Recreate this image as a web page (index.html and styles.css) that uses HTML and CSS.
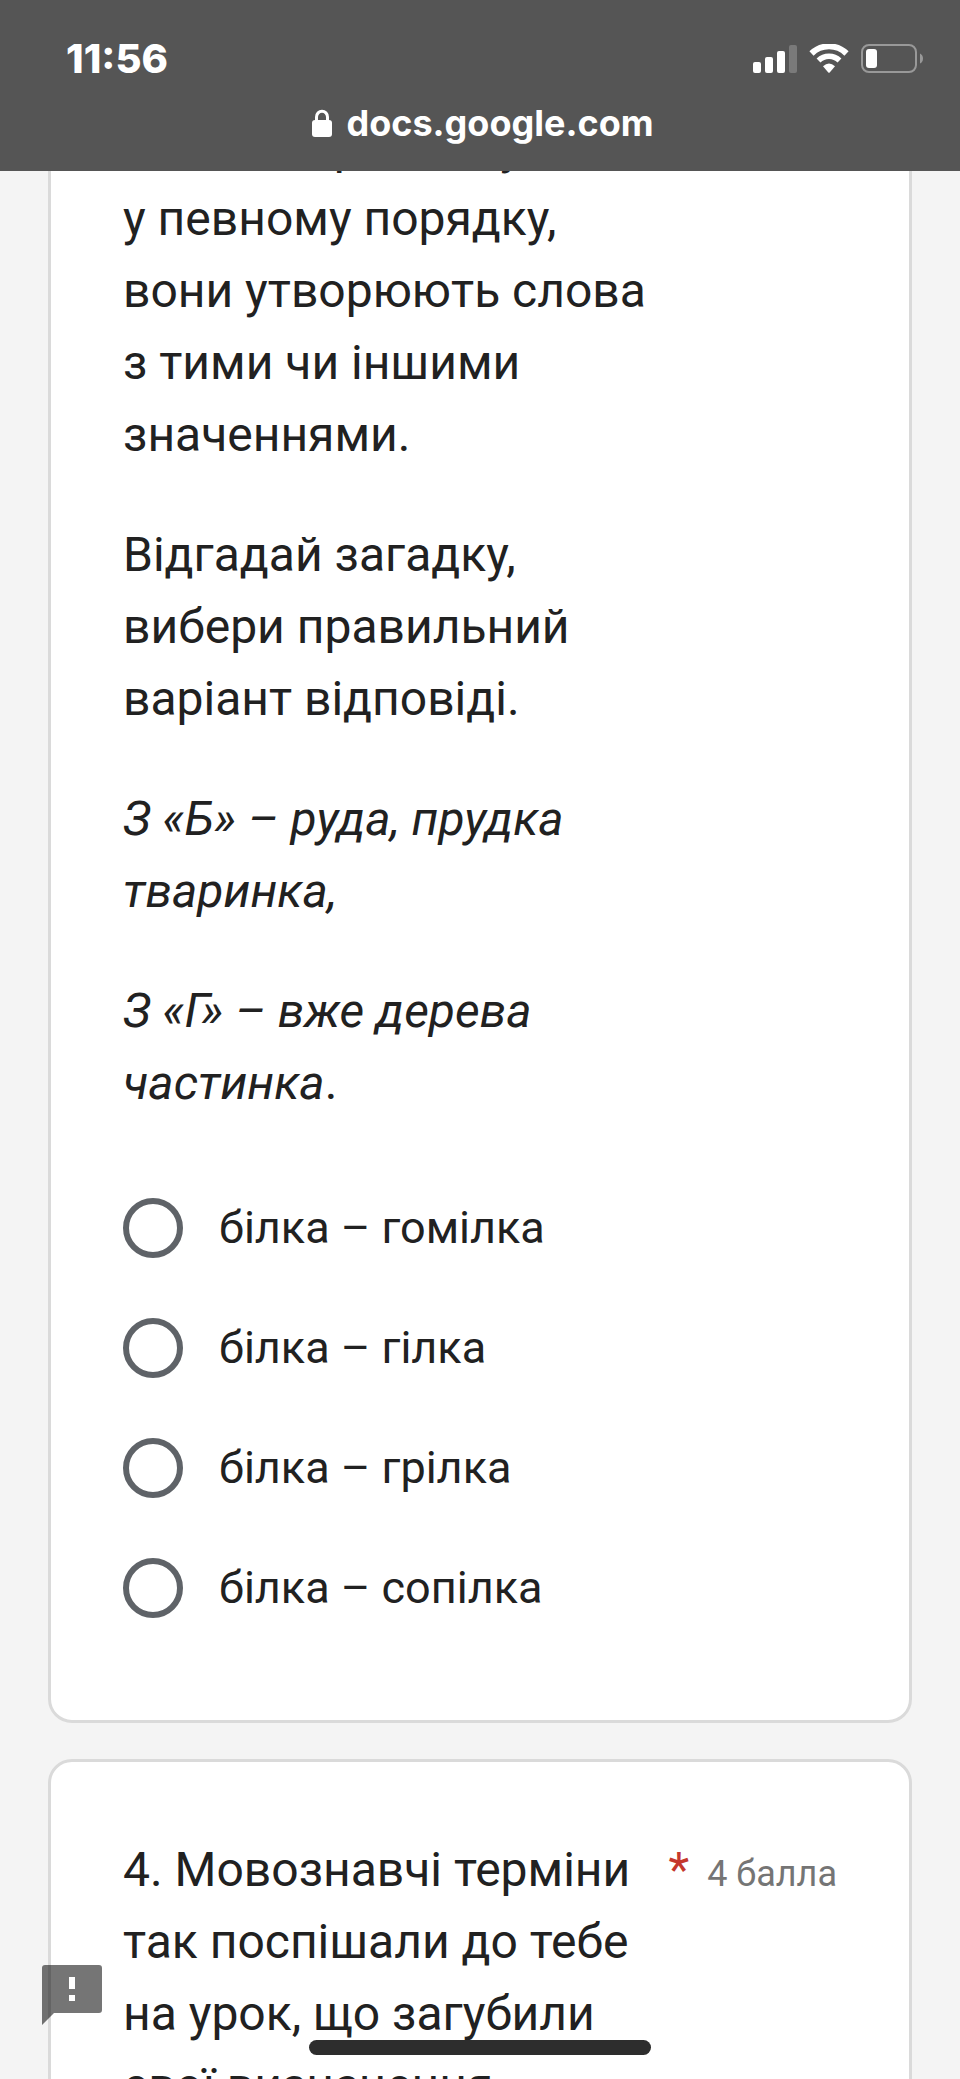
FILE: index.html
```
<!DOCTYPE html>
<html lang="uk">
<head>
  <meta charset="UTF-8" />
  <meta name="viewport" content="width=device-width, initial-scale=1.0"/>
  <title>Google Forms</title>
  <link rel="stylesheet" href="styles.css">
</head>
<body>
  <header class="browser-bar">
    <div class="status">
      <span class="time">11:56</span>
      <div class="status-icons">
        <svg width="44" height="30" viewBox="0 0 44 30" fill="#fff">
          <rect x="0" y="18" width="8" height="11" rx="2"/>
          <rect x="12" y="13" width="8" height="16" rx="2"/>
          <rect x="24" y="7" width="8" height="22" rx="2"/>
          <rect x="36" y="1" width="8" height="28" rx="2" opacity="0.22"/>
        </svg>
        <svg width="40" height="30" viewBox="0 0 40 30" fill="none" stroke="#fff">
          <path d="M2.500 9.500A25 25 0 0 1 37.500 9.500" stroke-width="6"/>
          <path d="M9.500 16.500A15 15 0 0 1 30.500 16.500" stroke-width="5.5"/>
          <path d="M14 22.200Q20 17 26 22.200L20.700 28.500Q20 29.200 19.300 28.500Z" fill="#fff" stroke="none"/>
        </svg>
        <svg width="63" height="30" viewBox="0 0 63 30">
          <rect x="1" y="1" width="54" height="27" rx="7" fill="none" stroke="#999" stroke-width="2"/>
          <rect x="5" y="5" width="11" height="19" rx="3" fill="#fff"/>
          <path d="M59 9.500Q62 11 62 14.500T59 19.500Z" fill="#999"/>
        </svg>
      </div>
    </div>
    <div class="address">
      <svg width="20" height="28" viewBox="0 0 20 28">
        <path d="M4.500 13V8a5.500 5.800 0 0 1 11 0v5" fill="none" stroke="#fff" stroke-width="3"/>
        <rect x="0" y="11" width="20" height="17" rx="3" fill="#fff"/>
      </svg>
      <span>docs.google.com</span>
    </div>
  </header>

  <main>
    <form>
      <section class="card">
        <div class="question">
          <div class="title" id="q3">
            <p>Якщо ми розташувати у певному порядку, вони утворюють слова з тими чи іншими значеннями.</p>
            <p>Відгадай загадку, вибери правильний варіант відповіді.</p>
            <p><i>З «Б» – руда, прудка тваринка,</i></p>
            <p><i>З «Г» – вже дерева частинка</i>.</p>
          </div>
        </div>
        <div class="options" role="radiogroup" aria-labelledby="q3">
          <label><input type="radio" name="q3" value="1">білка – гомілка</label>
          <label><input type="radio" name="q3" value="2">білка – гілка</label>
          <label><input type="radio" name="q3" value="3">білка – грілка</label>
          <label><input type="radio" name="q3" value="4">білка – сопілка</label>
        </div>
      </section>

      <section class="card">
        <div class="question">
          <div class="title">
            <p>4. Мовознавчі терміни так поспішали до тебе на урок, що загубили свої визначення.</p>
          </div>
          <div class="meta">
            <span class="required">*</span>
            <span class="points">4 балла</span>
          </div>
        </div>
      </section>
    </form>
  </main>

  <button type="button" class="report" aria-label="Повідомити про проблему">
    <svg width="72" height="72" viewBox="0 0 24 24">
      <path d="M21 2H3a1 1 0 0 0-1 1v19l4-4h15a1 1 0 0 0 1-1V3a1 1 0 0 0-1-1z" fill="#000" fill-opacity="0.54"/>
      <path d="M11 6h2v4h-2zM11 12h2v2h-2z" fill="#fff"/>
    </svg>
  </button>
  <div class="home-indicator"></div>
</body>
</html>
```

FILE: styles.css
```
* {
  box-sizing: border-box;
}
body {
  margin: 0;
  height: 100vh;
  overflow: hidden;
  background: #f4f4f4;
  color: #212121;
  font-family: Roboto, sans-serif;
  font-size: 48px;
  line-height: 72px;
}
svg {
  display: block;
}

/* browser */
.browser-bar {
  position: fixed;
  top: 0;
  left: 0;
  right: 0;
  z-index: 2;
  height: 171px;
  padding: 35px 36px 0 66px;
  background: #555;
  color: #fff;
  font-family: Inter, sans-serif;
  font-weight: 700;
}
.status {
  display: flex;
  justify-content: space-between;
  align-items: center;
  height: 48px;
  font-size: 40px;
  font-weight: 800;
  line-height: 48px;
}
.status-icons {
  display: flex;
  gap: 12px;
}
.address {
  display: flex;
  justify-content: center;
  align-items: center;
  gap: 14px;
  height: 48px;
  margin-top: 16px;
  padding-right: 24px;
  font-size: 36px;
  line-height: 48px;
}

/* form */
main {
  padding: 36px 48px;
}
.card {
  margin-bottom: 36px;
  padding: 72px;
  background: #fff;
  border: 3px solid #dadada;
  border-radius: 24px;
}
.question {
  display: grid;
  grid-template-columns: 1fr 180px;
}
.title p {
  margin: 0 0 48px;
}
.title p:last-child {
  margin-bottom: 0;
}
.meta {
  display: flex;
  justify-content: flex-end;
  align-items: baseline;
  gap: 18px;
  white-space: nowrap;
}
.required {
  color: #c5372c;
}
.points {
  color: #757575;
  font-size: 36px;
}
.options {
  display: flex;
  flex-direction: column;
  gap: 60px;
  padding: 79px 0 30px;
}
.options label {
  display: flex;
  align-items: center;
  gap: 36px;
  font-size: 45px;
  line-height: 60px;
}
.options input {
  appearance: none;
  flex: none;
  width: 60px;
  height: 60px;
  margin: 0;
  border: 6px solid #5f6368;
  border-radius: 50%;
}
.options input:checked {
  background: radial-gradient(#673ab7 50%, transparent 52%);
  border-color: #673ab7;
}

/* floating */
.report {
  position: fixed;
  left: 36px;
  bottom: 48px;
  padding: 0;
  background: none;
  border: none;
  cursor: pointer;
}
.home-indicator {
  position: fixed;
  left: 50%;
  bottom: 24px;
  width: 342px;
  height: 15px;
  margin-left: -171px;
  background: #2d2d2d;
  border-radius: 8px;
}
```
